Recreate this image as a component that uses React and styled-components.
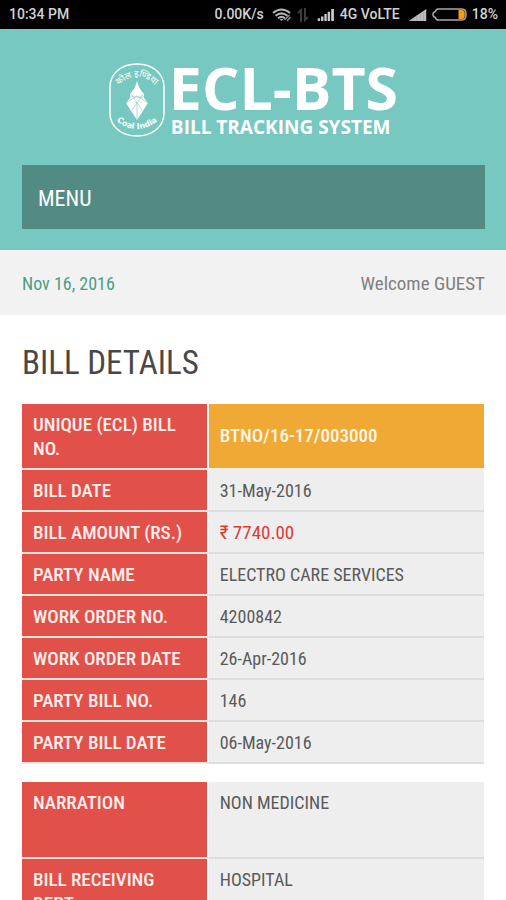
import React from "react";
import styled, { createGlobalStyle } from "styled-components";

const GlobalStyle = createGlobalStyle`
  *, *::before, *::after { box-sizing: border-box; }
  body {
    margin: 0;
    background: #fff;
    color: #555;
    font-family: "Roboto Condensed", "Liberation Sans Narrow", Roboto, "Liberation Sans", sans-serif;
  }
`;

const Screen = styled.div`
  height: 100vh;
  display: flex;
  flex-direction: column;
  overflow: hidden;
`;

const StatusBar = styled.div`
  flex: none;
  display: flex;
  align-items: center;
  justify-content: space-between;
  height: 29px;
  padding: 0 8px 0 9px;
  background: #000;
  color: #d2d2d2;
  font: 500 14px/29px Roboto, sans-serif;
  white-space: nowrap;
`;

const StatusItems = styled.div`
  display: flex;
  align-items: center;
  gap: 8px;
`;

const StatusGroup = styled.div`
  display: flex;
  align-items: center;
  gap: 5px;
`;

const Scroller = styled.div`
  flex: 1;
  min-height: 0;
  overflow-y: auto;
  scrollbar-width: none;
`;

const Header = styled.header`
  padding: 31px 21px 21px 22px;
  background: #77c8c0;
`;

const Brand = styled.a`
  display: flex;
  align-items: center;
  justify-content: center;
  gap: 4px;
  color: #fff;
  text-decoration: none;
`;

const BrandText = styled.span`
  display: flex;
  flex-direction: column;
`;

const BrandName = styled.span`
  font: 700 59px/54px "Open Sans", "Noto Sans", sans-serif;
`;

const BrandTagline = styled.span`
  padding-left: 2px;
  font: 700 19px/26px "Open Sans", "Noto Sans", sans-serif;
`;

const MenuButton = styled.button`
  display: block;
  width: 100%;
  height: 64px;
  margin-top: 25px;
  padding: 2px 16px 0;
  border: 0;
  background: #528b84;
  color: #fff;
  font: inherit;
  font-size: 22px;
  text-align: left;
`;

const InfoBar = styled.div`
  display: flex;
  align-items: center;
  justify-content: space-between;
  height: 65px;
  padding: 2px 21px 0 22px;
  background: #f2f2f2;
  color: #808080;
  font-size: 19px;
`;

const Today = styled.time`
  color: #4a9e88;
  font-size: 18px;
`;

const Content = styled.main`
  padding: 24px 22px;
`;

const Title = styled.h1`
  margin: 0 0 17px;
  color: #484848;
  font-size: 33px;
  font-weight: 400;
  line-height: 48px;
`;

const Details = styled.table`
  width: 100%;
  margin-bottom: 18px;
  border-collapse: collapse;
  table-layout: fixed;
  font-size: 18px;
  line-height: 24px;
`;

const Row = styled.tr`
  height: ${(p) => (p.$tall ? "76px" : "42px")};
  vertical-align: ${(p) => (p.$top ? "top" : "middle")};
`;

const Label = styled.th`
  width: 40.2%;
  padding: 9px 11px 7px;
  border-right: 2px solid #fff;
  border-bottom: 2px solid #fbe3e0;
  background: #e25149;
  color: #fdeeec;
  font-size: 19px;
  font-weight: 500;
  text-align: left;
  vertical-align: inherit;
`;

const tones = {
  plain: { background: "#eee", color: "#5a5a5a", line: "#ddd" },
  amount: { background: "#eee", color: "#dc3a35", line: "#ddd" },
  highlight: { background: "#f1a936", color: "#fff6e4", line: "#f5f0e4" },
};

const Value = styled.td`
  padding: ${(p) => (p.$tone === "highlight" ? "8px 11px" : "9px 11px 7px")};
  border-bottom: 2px solid ${(p) => tones[p.$tone].line};
  background: ${(p) => tones[p.$tone].background};
  color: ${(p) => tones[p.$tone].color};
  font-size: ${(p) => (p.$tone === "plain" ? "18px" : "19px")};
  font-weight: ${(p) => (p.$tone === "highlight" ? 500 : 400)};
  vertical-align: inherit;
`;

const billRows = [
  { label: "UNIQUE (ECL) BILL NO.", value: "BTNO/16-17/003000", tone: "highlight" },
  { label: "BILL DATE", value: "31-May-2016" },
  { label: "BILL AMOUNT (RS.)", value: "₹ 7740.00", tone: "amount" },
  { label: "PARTY NAME", value: "ELECTRO CARE SERVICES" },
  { label: "WORK ORDER NO.", value: "4200842" },
  { label: "WORK ORDER DATE", value: "26-Apr-2016" },
  { label: "PARTY BILL NO.", value: "146" },
  { label: "PARTY BILL DATE", value: "06-May-2016" },
];

const narrationRows = [
  { label: "NARRATION", value: "NON MEDICINE", tall: true },
  { label: "BILL RECEIVING DEPT.", value: "HOSPITAL" },
];

function DetailsTable({ rows, top }) {
  return (
    <Details>
      <tbody>
        {rows.map((r) => (
          <Row key={r.label} $tall={r.tall} $top={top}>
            <Label scope="row">{r.label}</Label>
            <Value $tone={r.tone || "plain"}>{r.value}</Value>
          </Row>
        ))}
      </tbody>
    </Details>
  );
}

function WifiIcon() {
  return (
    <svg width="20" height="14" viewBox="0 0 20 14" fill="none" stroke="#b4b4b4" strokeWidth="2" aria-hidden="true">
      <path d="M1 5Q9.500-2 18 5M3.500 7.700Q9.500 3 15.500 7.700M6 10.300Q9.500 7.500 13 10.300" />
      <path d="M7.500 11L9.500 13L11.500 11Z" fill="#b4b4b4" stroke="none" />
      <path d="M12.500 12L17.500 7M15 13L18.500 9" stroke="#888" strokeWidth="1.500" />
    </svg>
  );
}

function TransferIcon() {
  return (
    <svg width="12" height="14" viewBox="0 0 12 14" fill="none" stroke="#3c3c3c" strokeWidth="2" aria-hidden="true">
      <path d="M4 14V2L1 5M8 0V12L11 9" />
    </svg>
  );
}

function SignalBars() {
  return (
    <svg width="18" height="12" viewBox="0 0 18 13" fill="#c8c8c8" aria-hidden="true">
      <path d="M0 10h2.600v3H0zM3.600 8h2.600v5H3.600zM7.200 5.500h2.600V13H7.200zM10.800 3h2.600v10h-2.600zM14.600 0h3v13h-3z" />
    </svg>
  );
}

function SignalWedge() {
  return (
    <svg width="19" height="12" viewBox="0 0 19 13" aria-hidden="true">
      <path d="M0 13L19 0V13Z" fill="#bdbdbd" />
      <path d="M4.500 10V13M8.500 7V13M12.500 4.500V13M16 2V13" stroke="#a0a0a0" strokeWidth="0.700" />
    </svg>
  );
}

function BatteryIcon() {
  return (
    <svg width="35" height="13" viewBox="0 0 35 13" aria-hidden="true">
      <path d="M6 1H30Q34 1 34 6.500T30 12H6Q4 12 3.500 9.500Q1 9 1 6.500T3.500 3.500Q4 1 6 1Z" fill="#000" stroke="#a8a8a8" strokeWidth="1.500" strokeLinejoin="round" />
      <path d="M26.500 2H30Q32.800 2 32.800 6.500T30 11H26.500Z" fill="#f79a1c" />
    </svg>
  );
}

function Emblem() {
  return (
    <svg width="56" height="74" viewBox="0 0 56 74" fill="none" stroke="#fff" role="img" aria-label="Coal India">
      <defs>
        <path id="emblem-top" d="M9 23Q28 5 47 23" />
        <path id="emblem-bottom" d="M5 56Q28 76 51 56" />
      </defs>
      <path d="M1 24C1 10 13 1 28 1S55 10 55 24V50C55 64 43 73 28 73S1 64 1 50Z" strokeWidth="1.500" />
      <text fill="#fff" stroke="none" fontFamily="Noto Sans, Noto Sans Devanagari, sans-serif" fontSize="9" textAnchor="middle">
        <textPath href="#emblem-top" startOffset="50%">कोल इण्डिया</textPath>
      </text>
      <text fill="#fff" stroke="none" fontFamily="DejaVu Sans, sans-serif" fontWeight="700" fontSize="8" textAnchor="middle">
        <textPath href="#emblem-bottom" startOffset="50%">Coal India</textPath>
      </text>
      <path d="M28 18Q30 26 35 31V35L39 40L28 57L17 40L21 35V31Q26 26 28 18Z" fill="#fff" stroke="none" />
      <path d="M21 34H35M22 31L28 40L34 31M17 40L28 33L39 40M28 40V56M28 40L23 47M28 40L33 47" stroke="#77c8c0" strokeWidth="0.600" />
    </svg>
  );
}

export default function App() {
  return (
    <>
      <GlobalStyle />
      <Screen>
        <StatusBar>
          <span>10:34 PM</span>
          <StatusItems>
            <span>0.00K/s</span>
            <StatusGroup>
              <WifiIcon />
              <TransferIcon />
            </StatusGroup>
            <StatusGroup>
              <SignalBars />
              <span>4G VoLTE</span>
            </StatusGroup>
            <StatusGroup>
              <SignalWedge />
              <BatteryIcon />
              <span>18%</span>
            </StatusGroup>
          </StatusItems>
        </StatusBar>
        <Scroller>
          <Header>
            <Brand href="#home">
              <Emblem />
              <BrandText>
                <BrandName>ECL-BTS</BrandName>
                <BrandTagline>BILL TRACKING SYSTEM</BrandTagline>
              </BrandText>
            </Brand>
            <MenuButton type="button">MENU</MenuButton>
          </Header>
          <InfoBar>
            <Today dateTime="2016-11-16">Nov 16, 2016</Today>
            <span>Welcome GUEST</span>
          </InfoBar>
          <Content>
            <Title>BILL DETAILS</Title>
            <DetailsTable rows={billRows} />
            <DetailsTable rows={narrationRows} top />
          </Content>
        </Scroller>
      </Screen>
    </>
  );
}
